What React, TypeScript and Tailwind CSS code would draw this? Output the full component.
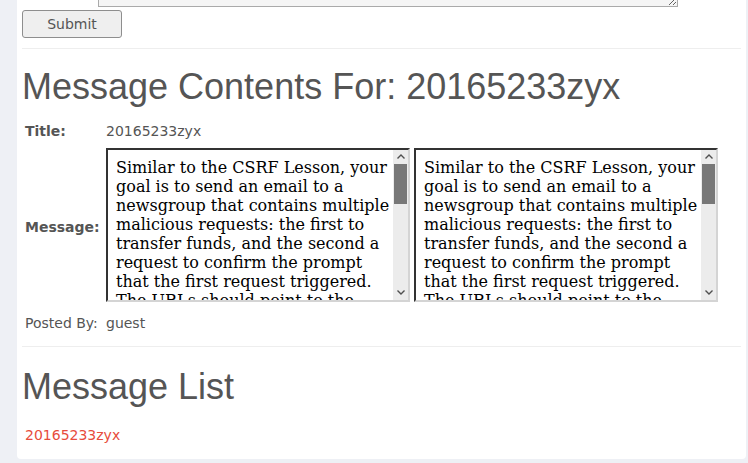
const message =
  "Similar to the CSRF Lesson, your goal is to send an email to a newsgroup that contains multiple malicious requests: the first to transfer funds, and the second a request to confirm the prompt that the first request triggered. The URLs should point to the attack servlet with your Screen, menu parameters and a new parameter called transferFunds with a number value of funds to transfer, such as transferFunds=4000, and the second request with transferFunds=CONFIRM.";

function Scrollbar() {
  return (
    <div className="w-[15px] shrink-0 h-full bg-[#ececec] flex flex-col">
      <div className="h-[14px] flex items-center justify-center">
        <svg width="8" height="5" viewBox="0 0 8 5">
          <path d="M0.5 4.5 L4 1 L7.5 4.5" fill="none" stroke="#505050" strokeWidth="1.4" />
        </svg>
      </div>
      <div className="h-[40px] mx-[1px] bg-[#787878]" />
      <div className="flex-1" />
      <div className="h-[14px] flex items-center justify-center">
        <svg width="8" height="5" viewBox="0 0 8 5">
          <path d="M0.5 0.5 L4 4 L7.5 0.5" fill="none" stroke="#505050" strokeWidth="1.4" />
        </svg>
      </div>
    </div>
  );
}

function MessageFrame() {
  return (
    <div className="w-[304px] h-[154px] shrink-0 border-2 border-t-[#333] border-l-[#333] border-b-[#d4d4d4] border-r-[#d4d4d4] bg-white flex overflow-hidden">
      <div className="flex-1 overflow-hidden">
        <p className="ml-[8px] mt-[8px] text-[16px] leading-[normal] text-black font-['DejaVu_Serif',serif]">{message}</p>
      </div>
      <Scrollbar />
    </div>
  );
}

export default function App() {
  return (
    <div className="min-h-[463px] bg-[#eef0f5] pl-[17px] pr-[2px] pb-[4px] font-['DejaVu_Sans',sans-serif] text-[14px] text-[#555]">
      <div className="bg-white rounded-b-[4px] px-[5px] pb-[14px]">
        {/* cut-off compose form */}
        <div className="h-[7px] overflow-hidden flex flex-col justify-end pl-[76px]">
          <textarea
            readOnly
            className="block shrink-0 w-[580px] h-[80px] bg-[#f5f5f5] border border-[#aaa] resize"
          />
        </div>
        <button className="mt-[3px] w-[100px] h-[28px] rounded-[3px] border border-[#8e8e8e] bg-[#efefef] text-[14px] text-[#555]">
          Submit
        </button>
        <hr className="mt-[10px] border-t border-[#eee]" />

        <h1 className="mt-[18px] text-[36px] leading-[1.1] font-['Liberation_Sans',sans-serif] text-[#555]">
          Message Contents For: 20165233zyx
        </h1>

        <div className="mt-[15px] pl-[3px]">
          <div className="flex items-center h-[20px]">
            <span className="w-[81px] font-bold">Title:</span>
            <span>20165233zyx</span>
          </div>
          <div className="flex items-center mt-[6px]">
            <span className="w-[81px] pt-[6px] font-bold">Message:</span>
            <div className="flex gap-[4px]">
              <MessageFrame />
              <MessageFrame />
            </div>
          </div>
          <div className="flex items-center h-[20px] mt-[12px]">
            <span className="w-[81px]">Posted By:</span>
            <span>guest</span>
          </div>
        </div>

        <hr className="mt-[12px] border-t border-[#eee]" />

        <h1 className="mt-[20px] text-[36px] leading-[1.1] font-['Liberation_Sans',sans-serif] text-[#555]">
          Message List
        </h1>
        <div className="mt-[19px] pl-[3px] h-[20px] flex items-center">
          <a href="#" className="text-[#e74c3c]">20165233zyx</a>
        </div>
      </div>
    </div>
  );
}
